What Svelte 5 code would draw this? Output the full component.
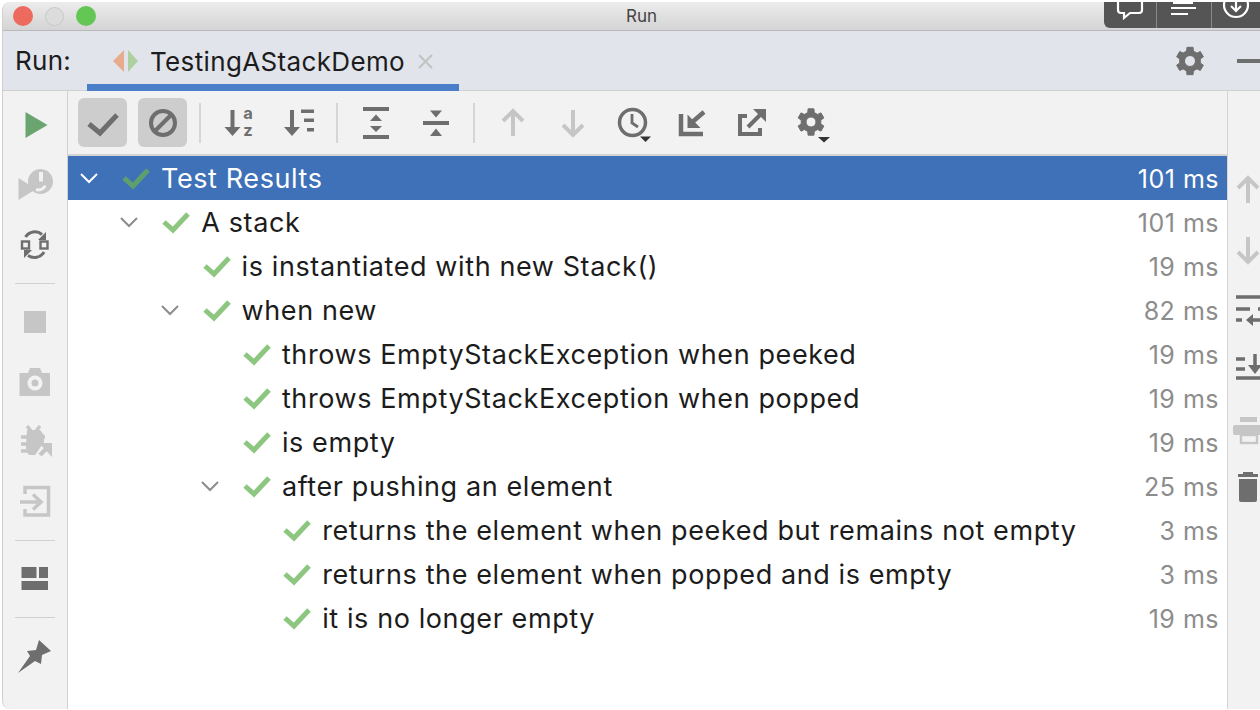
<script>
    // gear outline with a round hole, used by both settings icons
    function gearPath(cx, cy, outer, inner, hole) {
        const teeth = 6;
        let d = '';
        for (let i = 0; i < teeth; i++) {
            const a = (i / teeth) * Math.PI * 2 - Math.PI / 2;
            const step = Math.PI / teeth;
            const pts = [
                [a - step * 0.42, outer],
                [a + step * 0.42, outer],
                [a + step * 0.62, inner],
                [a + step * 1.38, inner]
            ];
            for (const [t, r] of pts) {
                const x = (cx + Math.cos(t) * r).toFixed(2);
                const y = (cy + Math.sin(t) * r).toFixed(2);
                d += (d ? 'L' : 'M') + x + ' ' + y + ' ';
            }
        }
        d += 'Z ';
        d += `M${cx - hole} ${cy} a${hole} ${hole} 0 1 0 ${hole * 2} 0 a${hole} ${hole} 0 1 0 ${-hole * 2} 0 Z`;
        return d;
    }

    const rows = [
        { level: 0, label: 'Test Results', time: '101 ms', open: true, selected: true },
        { level: 1, label: 'A stack', time: '101 ms', open: true },
        { level: 2, label: 'is instantiated with new Stack()', time: '19 ms' },
        { level: 2, label: 'when new', time: '82 ms', open: true },
        { level: 3, label: 'throws EmptyStackException when peeked', time: '19 ms' },
        { level: 3, label: 'throws EmptyStackException when popped', time: '19 ms' },
        { level: 3, label: 'is empty', time: '19 ms' },
        { level: 3, label: 'after pushing an element', time: '25 ms', open: true },
        { level: 4, label: 'returns the element when peeked but remains not empty', time: '3 ms' },
        { level: 4, label: 'returns the element when popped and is empty', time: '3 ms' },
        { level: 4, label: 'it is no longer empty', time: '19 ms' }
    ];
</script>

<div class="window">
    <div class="titlebar">
        <div class="lights">
            <span class="light red"></span>
            <span class="light off"></span>
            <span class="light green"></span>
        </div>
        <span class="title">Run</span>
    </div>

    <div class="touchbar">
        <div class="touchcell first">
            <svg width="30" height="28" viewBox="0 0 30 28" fill="none" stroke="#fff" stroke-width="2.2">
                <path d="M6 -6 H24 a3 3 0 0 1 3 3 V10 a3 3 0 0 1 -3 3 H15 L9 18 V13 H6 a3 3 0 0 1 -3 -3 V-3 a3 3 0 0 1 3 -3 Z" />
            </svg>
        </div>
        <div class="touchcell second">
            <svg width="30" height="28" viewBox="0 0 30 28" fill="none" stroke="#fff" stroke-width="2">
                <path d="M5 -6 V3 H23 V-6 M2 8 H27 M2 14 H19" />
            </svg>
        </div>
        <div class="touchcell third">
            <svg width="30" height="28" viewBox="0 0 30 28" fill="none" stroke="#fff" stroke-width="2.2">
                <circle cx="15" cy="5" r="12" />
                <path d="M15 -1 V10 M10 6 L15 11 L20 6" />
            </svg>
        </div>
    </div>

    <div class="tabbar">
        <span class="runlabel">Run:</span>
        <div class="tab">
            <svg width="26" height="22" viewBox="0 0 26 22">
                <path d="M11 0 V22 L0 11 Z" fill="#e8ab8d" />
                <path d="M15 0 V22 L25 11 Z" fill="#add0a0" />
            </svg>
            <span class="tabname">TestingAStackDemo</span>
            <svg class="tabclose" width="17" height="17" viewBox="0 0 17 17" stroke="#c2c2c2" stroke-width="2">
                <path d="M2 2 L15 15 M15 2 L2 15" />
            </svg>
        </div>
        <svg class="tabgear" width="30" height="30" viewBox="0 0 30 30">
            <path d={gearPath(15, 15, 14, 10.5, 5.5)} fill="#6e6e6e" fill-rule="evenodd" stroke="#6e6e6e" stroke-width="1" stroke-linejoin="round" />
        </svg>
        <span class="minimize"></span>
    </div>

    <div class="main">
        <aside class="leftstrip">
            <div class="stripbtn">
                <svg width="40" height="40" viewBox="0 0 40 40"><path d="M10.5 7 L32.5 20 L10.5 33 Z" fill="#6aa56f" /></svg>
            </div>
            <div class="stripbtn">
                <svg width="40" height="40" viewBox="0 0 40 40">
                    <circle cx="25.5" cy="16.5" r="12.5" fill="#c6c6c6" />
                    <path d="M3.5 13 L21 24 L3.5 35 Z" fill="#c6c6c6" />
                    <path d="M24 7 h4 v9.5 h-4 Z" fill="#f2f2f2" />
                    <path d="M21 24.5 C24 25.5 29 24.5 30 20.5" stroke="#f2f2f2" stroke-width="3" fill="none" />
                </svg>
            </div>
            <div class="stripbtn">
                <svg width="40" height="40" viewBox="0 0 40 40" fill="none" stroke="#6e6e6e" stroke-width="3">
                    <path d="M10.5 12 A11 11 0 0 1 27 9.5 M29 27 A11 11 0 0 1 13 30.5" />
                    <path d="M31 7 V15 H23 Z M9 33 V25 H17 Z" fill="#6e6e6e" stroke="none" />
                    <rect x="7" y="16.5" width="7" height="7" stroke-width="2.4" />
                    <rect x="25.5" y="16.5" width="7" height="7" stroke-width="2.4" />
                </svg>
            </div>
            <div class="stripsep"></div>
            <div class="stripbtn">
                <svg width="40" height="40" viewBox="0 0 40 40"><rect x="9" y="9" width="22" height="22" fill="#c6c6c6" /></svg>
            </div>
            <div class="stripbtn">
                <svg width="40" height="40" viewBox="0 0 40 40">
                    <path d="M4.5 11 H13 L15 6 H25 L27 11 H35 V34 H4.5 Z" fill="#c6c6c6" />
                    <circle cx="20" cy="21" r="7.5" fill="#f2f2f2" />
                    <circle cx="20" cy="21" r="3.5" fill="#c6c6c6" />
                </svg>
            </div>
            <div class="stripbtn">
                <svg width="40" height="40" viewBox="0 0 40 40" fill="none" stroke="#c6c6c6" stroke-width="3.4">
                    <path d="M12 4 L16 9 M25 4 L21 9 M6 15 H30 M6 22 H24 M6 29 H22" />
                    <path d="M12 8 H25 L29 13 V20 L20 33 H14 Q11 30 11 24 Z" fill="#c6c6c6" stroke="none" />
                    <path d="M25 33 L34 24" stroke-width="4.5" />
                    <path d="M24 21 H37 V35 Z" fill="#c6c6c6" stroke="none" />
                </svg>
            </div>
            <div class="stripbtn">
                <svg width="40" height="40" viewBox="0 0 40 40" fill="none" stroke="#c6c6c6" stroke-width="3.5">
                    <path d="M10 12 V5.5 H33.5 V33 H10 V27" />
                    <path d="M5 20 H24 M18 12.5 L26 20 L18 27.5" />
                </svg>
            </div>
            <div class="stripsep"></div>
            <div class="stripbtn">
                <svg width="40" height="40" viewBox="0 0 40 40" fill="#6e6e6e">
                    <rect x="6.5" y="8" width="15" height="11" />
                    <rect x="24" y="8" width="9" height="11" />
                    <rect x="6.5" y="22" width="26.5" height="9" />
                </svg>
            </div>
            <div class="stripsep"></div>
            <div class="stripbtn">
                <svg width="40" height="40" viewBox="0 0 40 40">
                    <path d="M3 37 L15 20 L12 15 L21 14 L24 4 L36 15 L27 19 L26 28 L20 25 Z" fill="#6e6e6e" />
                </svg>
            </div>
        </aside>

        <div class="center">
            <div class="toolbar">
                <div class="toolbtn on">
                    <svg width="40" height="40" viewBox="0 0 40 40" fill="none" stroke="#6e6e6e" stroke-width="5">
                        <path d="M6 21 L17 30 L34 12" />
                    </svg>
                </div>
                <div class="toolbtn on">
                    <svg width="40" height="40" viewBox="0 0 40 40" fill="none" stroke="#6e6e6e" stroke-width="4">
                        <circle cx="20" cy="20" r="12" />
                        <path d="M12 28 L28 12" />
                    </svg>
                </div>
                <div class="toolsep firstsep"></div>
                <div class="toolbtn">
                    <svg width="40" height="40" viewBox="0 0 40 40">
                        <path d="M13.5 7 V26" stroke="#6e6e6e" stroke-width="4" />
                        <path d="M5.5 24 H21.5 L13.5 33 Z" fill="#6e6e6e" />
                        <text class="sorta" x="29" y="16">a</text>
                        <text class="sorta" x="29" y="33">z</text>
                    </svg>
                </div>
                <div class="toolbtn">
                    <svg width="40" height="40" viewBox="0 0 40 40" fill="#6e6e6e">
                        <path d="M13 7 V26" stroke="#6e6e6e" stroke-width="4" />
                        <path d="M5 24 H21 L13 33 Z" />
                        <rect x="22" y="6.5" width="13" height="3.5" />
                        <rect x="25" y="15.5" width="10" height="3.5" />
                        <rect x="28" y="25" width="7" height="3.5" />
                    </svg>
                </div>
                <div class="toolsep"></div>
                <div class="toolbtn">
                    <svg width="40" height="40" viewBox="0 0 40 40" fill="#6e6e6e">
                        <rect x="7" y="4" width="26" height="4" />
                        <rect x="7" y="32" width="26" height="4" />
                        <path d="M20 11.5 L26 18 H14 Z M20 29 L26 23 H14 Z" />
                    </svg>
                </div>
                <div class="toolbtn">
                    <svg width="40" height="40" viewBox="0 0 40 40" fill="#6e6e6e">
                        <rect x="7" y="18" width="26" height="4" />
                        <path d="M14 7.5 H26 L20 14.5 Z M14 33 H26 L20 25.5 Z" />
                    </svg>
                </div>
                <div class="toolsep"></div>
                <div class="toolbtn">
                    <svg width="40" height="40" viewBox="0 0 40 40" fill="none" stroke="#c6c6c6" stroke-width="4">
                        <path d="M20 8 V33 M10 18 L20 8 L30 18" />
                    </svg>
                </div>
                <div class="toolbtn">
                    <svg width="40" height="40" viewBox="0 0 40 40" fill="none" stroke="#c6c6c6" stroke-width="4">
                        <path d="M20 7 V32 M10 22 L20 32 L30 22" />
                    </svg>
                </div>
                <div class="toolbtn">
                    <svg width="40" height="40" viewBox="0 0 40 40" fill="none" stroke="#6e6e6e" stroke-width="3.5">
                        <circle cx="19.5" cy="19.5" r="13" />
                        <path d="M19 11 V20 L25 24" stroke-width="2.8" />
                        <path d="M27 33.5 H38 L32.5 39 Z" fill="#333" stroke="none" />
                    </svg>
                </div>
                <div class="toolbtn">
                    <svg width="40" height="40" viewBox="0 0 40 40" fill="none" stroke="#6e6e6e" stroke-width="4.5">
                        <path d="M8 11 V31 H30" />
                        <path d="M17 21 L31 9" />
                        <path d="M14.5 11.5 V25 H27.5 Z" fill="#6e6e6e" stroke="none" />
                    </svg>
                </div>
                <div class="toolbtn">
                    <svg width="40" height="40" viewBox="0 0 40 40" fill="none" stroke="#6e6e6e" stroke-width="4">
                        <path d="M14 13 H7 V31 H27 V25" />
                        <path d="M15 24 L28 11" />
                        <path d="M20 6 H33 V19 Z" fill="#6e6e6e" stroke="none" />
                    </svg>
                </div>
                <div class="toolbtn">
                    <svg width="40" height="40" viewBox="0 0 40 40">
                        <path d={gearPath(18, 19, 13.5, 10, 5)} fill="#6e6e6e" fill-rule="evenodd" stroke="#6e6e6e" stroke-width="1" stroke-linejoin="round" />
                        <path d="M25 34 H37 L31 39.5 Z" fill="#333" />
                    </svg>
                </div>
            </div>

            <div class="tree">
                {#each rows as row}
                    <div class="row" class:selected={row.selected} style="padding-left: {12 + row.level * 40.3}px">
                        <span class="chevron">
                            {#if row.open}
                                <svg width="18" height="12" viewBox="0 0 18 12" fill="none" stroke={row.selected ? '#fff' : '#8c8c8c'} stroke-width="2">
                                    <path d="M1 2 L9 10 L17 2" />
                                </svg>
                            {/if}
                        </span>
                        <svg class="check" width="28" height="24" viewBox="0 0 28 24" fill="none" stroke={row.selected ? '#5f9f6d' : '#8cc67f'} stroke-width="5">
                            <path d="M2 12 L11 20 L26 4" />
                        </svg>
                        <span class="label">{row.label}</span>
                        <span class="time">{row.time}</span>
                    </div>
                {/each}
            </div>
        </div>

        <aside class="rightstrip">
            <div class="stripbtn">
                <svg width="40" height="40" viewBox="0 0 40 40" fill="none" stroke="#c6c6c6" stroke-width="4">
                    <path d="M20 8 V33 M10 18 L20 8 L30 18" />
                </svg>
            </div>
            <div class="stripbtn">
                <svg width="40" height="40" viewBox="0 0 40 40" fill="none" stroke="#c6c6c6" stroke-width="4">
                    <path d="M20 7 V32 M10 22 L20 32 L30 22" />
                </svg>
            </div>
            <div class="stripbtn">
                <svg width="40" height="40" viewBox="0 0 40 40" fill="none" stroke="#6e6e6e" stroke-width="3.5">
                    <path d="M8 7 H40 M8 19 H22 M30 19 H34 A5.5 5.5 0 0 1 34 30 H22 M8 30 H14" />
                    <path d="M25 24 L18 30 L25 36 Z" fill="#6e6e6e" stroke="none" />
                </svg>
            </div>
            <div class="stripbtn">
                <svg width="40" height="40" viewBox="0 0 40 40" fill="none" stroke="#6e6e6e" stroke-width="3.5">
                    <path d="M8 9 H17 M8 19 H17 M8 28 H40" />
                    <path d="M27 4 V18" />
                    <path d="M20 15 H34 L27 24 Z" fill="#6e6e6e" stroke="none" />
                </svg>
            </div>
            <div class="stripbtn">
                <svg width="40" height="40" viewBox="0 0 40 40" fill="#c6c6c6">
                    <rect x="12" y="7" width="17" height="5" />
                    <rect x="5" y="15" width="35" height="10" rx="2" />
                    <rect x="13" y="25" width="16" height="8" fill="none" stroke="#c6c6c6" stroke-width="2.4" />
                </svg>
            </div>
            <div class="stripbtn">
                <svg width="40" height="40" viewBox="0 0 40 40" fill="#6e6e6e">
                    <rect x="10" y="4" width="20" height="3" />
                    <rect x="15" y="2" width="10" height="3" />
                    <path d="M11 9 H29 V30 a2 2 0 0 1 -2 2 H13 a2 2 0 0 1 -2 -2 Z" />
                </svg>
            </div>
        </aside>
    </div>
</div>

<style>
    :global(body) {
        background: #fff;
        overflow: hidden;
        font-family: Inter, "Liberation Sans", sans-serif;
    }

    svg {
        display: block;
        flex: none;
        overflow: hidden;
    }

    .window {
        position: relative;
        box-sizing: border-box;
        width: 1258px;
        height: 707px;
        margin: 2px 0 0 2px;
        border-left: 1px solid #cfcfcf;
        border-radius: 8px 0 0 8px;
        overflow: hidden;
        background: #f2f2f2;
    }

    .titlebar {
        box-sizing: border-box;
        height: 29px;
        display: flex;
        align-items: center;
        justify-content: center;
        position: relative;
        background: linear-gradient(#ececec, #d4d4d4);
        border-bottom: 1px solid #b9b9b9;
    }

    .lights {
        position: absolute;
        left: 10px;
        top: 4px;
        display: flex;
        gap: 12px;
        align-items: center;
    }

    .light {
        width: 20px;
        height: 20px;
        border-radius: 50%;
    }

    .red {
        background: #ec6a5e;
    }

    .off {
        width: 17px;
        height: 17px;
        background: #dcdcdc;
        border: 1px solid #c8c8c8;
    }

    .green {
        background: #63c655;
    }

    .title {
        font-size: 17px;
        color: #444;
        margin-left: 20px;
    }

    .touchbar {
        position: absolute;
        right: 0;
        top: -2px;
        width: 156px;
        height: 28px;
        display: flex;
        background: #555;
        border-bottom-left-radius: 6px;
    }

    .touchcell {
        box-sizing: border-box;
        display: flex;
        justify-content: center;
    }

    .first {
        width: 53px;
        border-right: 1px solid #8a8a8a;
    }

    .second {
        width: 55px;
        border-right: 1px solid #8a8a8a;
    }

    .third {
        width: 48px;
    }

    .tabbar {
        box-sizing: border-box;
        height: 60px;
        display: flex;
        align-items: center;
        background: #e1e4ea;
        border-bottom: 1px solid #d0d0d0;
    }

    .runlabel {
        font-size: 26px;
        letter-spacing: 0.3px;
        color: #1c1c1c;
        width: 84px;
        padding-left: 12px;
        box-sizing: border-box;
    }

    .tab {
        box-sizing: border-box;
        width: 372px;
        height: 100%;
        padding: 7px 0 0 26px;
        display: flex;
        align-items: center;
        gap: 11px;
        border-bottom: 7px solid #4a7ec8;
        margin-bottom: -1px;
    }

    .tabname {
        font-size: 26px;
        letter-spacing: 0.35px;
        color: #1c1c1c;
        white-space: nowrap;
    }

    .tabclose {
        margin-left: 1px;
    }

    .tabgear {
        margin-left: auto;
        margin-right: 32px;
    }

    .minimize {
        width: 23px;
        height: 4px;
        background: #6e6e6e;
    }

    .main {
        display: flex;
        height: 618px;
    }

    .leftstrip {
        box-sizing: border-box;
        width: 65px;
        flex: none;
        padding-top: 4px;
        display: flex;
        flex-direction: column;
        align-items: center;
        border-right: 1px solid #cfcfcf;
    }

    .rightstrip {
        flex: none;
        width: 40px;
        padding-top: 69px;
        display: flex;
        flex-direction: column;
    }

    .stripbtn {
        height: 60px;
        flex: none;
        display: flex;
        align-items: center;
        justify-content: center;
    }

    .stripsep {
        flex: none;
        width: 40px;
        height: 1px;
        margin: 8px 0;
        background: #d0d0d0;
    }

    .center {
        box-sizing: border-box;
        width: 1160px;
        flex: none;
        border-right: 1px solid #d4d4d4;
        background: #fff;
    }

    .toolbar {
        box-sizing: border-box;
        height: 65px;
        padding-left: 10px;
        display: flex;
        align-items: center;
        gap: 11px;
        background: #f2f2f2;
        border-bottom: 2px solid #d4d4d4;
    }

    .toolbtn {
        width: 49px;
        height: 49px;
        flex: none;
        display: flex;
        align-items: center;
        justify-content: center;
        border-radius: 6px;
    }

    .toolbtn.on {
        background: #cdcdcd;
    }

    .toolsep {
        width: 2px;
        height: 40px;
        flex: none;
        background: #d6d6d6;
        margin: 0 2px;
    }

    .firstsep {
        margin-left: 1px;
    }

    .sorta {
        font-family: Inter, "Liberation Sans", sans-serif;
        font-size: 16.5px;
        font-weight: 700;
        fill: #6e6e6e;
        text-anchor: middle;
    }

    .row {
        box-sizing: border-box;
        height: 44px;
        display: flex;
        align-items: center;
        padding-right: 8px;
        font-size: 27px;
        letter-spacing: 0.6px;
        color: #1c1c1c;
        white-space: nowrap;
    }

    .row.selected {
        background: #3e71b7;
        color: #fff;
    }

    .chevron {
        width: 18px;
        flex: none;
        margin-right: 24px;
    }

    .check {
        margin-right: 11px;
    }

    .time {
        margin-left: auto;
        padding-top: 2px;
        color: #8c8c8c;
        font-size: 25px;
        letter-spacing: 0.5px;
    }

    .row.selected .time {
        color: #fff;
    }
</style>
